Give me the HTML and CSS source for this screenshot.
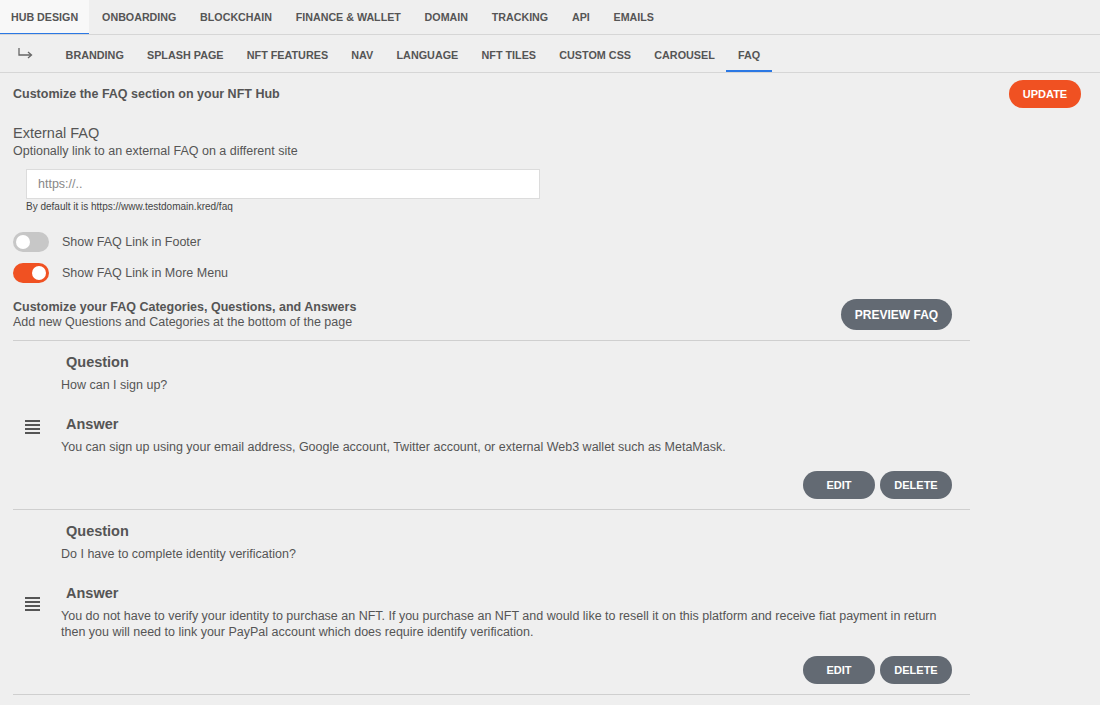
FILE: index.html
```html
<!DOCTYPE html>
<html lang="en">
<head>
    <meta charset="UTF-8">
    <meta name="viewport" content="width=device-width, initial-scale=1.0">
    <title>Hub Design - FAQ</title>
    <link rel="stylesheet" href="styles.css">
</head>
<body>
    <nav class="main-tabs">
        <a class="tab active">HUB DESIGN</a>
        <a class="tab">ONBOARDING</a>
        <a class="tab">BLOCKCHAIN</a>
        <a class="tab">FINANCE &amp; WALLET</a>
        <a class="tab">DOMAIN</a>
        <a class="tab">TRACKING</a>
        <a class="tab">API</a>
        <a class="tab">EMAILS</a>
    </nav>
    <nav class="sub-tabs">
        <span class="sub-arrow">
            <svg width="18" height="12" viewBox="0 0 18 12"><path d="M2 1v7h12" fill="none" stroke="#666" stroke-width="1.3"/><path d="M11 5l3.5 3-3.5 3" fill="none" stroke="#666" stroke-width="1.3"/></svg>
        </span>
        <a class="sub-tab">BRANDING</a>
        <a class="sub-tab">SPLASH PAGE</a>
        <a class="sub-tab">NFT FEATURES</a>
        <a class="sub-tab">NAV</a>
        <a class="sub-tab">LANGUAGE</a>
        <a class="sub-tab">NFT TILES</a>
        <a class="sub-tab">CUSTOM CSS</a>
        <a class="sub-tab">CAROUSEL</a>
        <a class="sub-tab active">FAQ</a>
    </nav>

    <main class="content">
        <div class="page-head">
            <h2>Customize the FAQ section on your NFT Hub</h2>
            <button class="btn btn-orange">UPDATE</button>
        </div>

        <h3 class="field-title">External FAQ</h3>
        <p class="field-desc">Optionally link to an external FAQ on a different site</p>
        <div class="field">
            <input type="text" placeholder="https://..">
            <small>By default it is https://www.testdomain.kred/faq</small>
        </div>

        <label class="switch-row">
            <span class="switch"></span>
            Show FAQ Link in Footer
        </label>
        <label class="switch-row">
            <span class="switch on"></span>
            Show FAQ Link in More Menu
        </label>

        <div class="faq-head">
            <div>
                <h4>Customize your FAQ Categories, Questions, and Answers</h4>
                <p>Add new Questions and Categories at the bottom of the page</p>
            </div>
            <button class="btn btn-grey btn-big">PREVIEW FAQ</button>
        </div>

        <div class="faq-list">
            <div class="faq-item">
                <div class="handle">
                    <svg width="15" height="14" viewBox="0 0 15 14"><g fill="#555"><rect y="0" width="15" height="2"/><rect y="4" width="15" height="2"/><rect y="8" width="15" height="2"/><rect y="12" width="15" height="2"/></g></svg>
                </div>
                <div class="faq-body">
                    <div class="label">Question</div>
                    <p class="text">How can I sign up?</p>
                    <div class="label answer">Answer</div>
                    <p class="text">You can sign up using your email address, Google account, Twitter account, or external Web3 wallet such as MetaMask.</p>
                    <div class="actions">
                        <button class="btn btn-grey">EDIT</button>
                        <button class="btn btn-grey">DELETE</button>
                    </div>
                </div>
            </div>
            <div class="faq-item">
                <div class="handle">
                    <svg width="15" height="14" viewBox="0 0 15 14"><g fill="#555"><rect y="0" width="15" height="2"/><rect y="4" width="15" height="2"/><rect y="8" width="15" height="2"/><rect y="12" width="15" height="2"/></g></svg>
                </div>
                <div class="faq-body">
                    <div class="label">Question</div>
                    <p class="text">Do I have to complete identity verification?</p>
                    <div class="label answer">Answer</div>
                    <p class="text">You do not have to verify your identity to purchase an NFT. If you purchase an NFT and would like to resell it on this platform and receive fiat payment in return then you will need to link your PayPal account which does require identify verification.</p>
                    <div class="actions">
                        <button class="btn btn-grey">EDIT</button>
                        <button class="btn btn-grey">DELETE</button>
                    </div>
                </div>
            </div>
        </div>
    </main>
</body>
</html>
```

FILE: styles.css
```css
body {
    font-family: "Liberation Sans", Arial, sans-serif;
    margin: 0;
    background-color: #efefef;
    color: #555;
}
a {
    cursor: pointer;
}
.main-tabs {
    display: flex;
    height: 34px;
    border-bottom: 1px solid #d6d6d6;
}
.tab {
    display: flex;
    align-items: center;
    padding: 0 11.9px;
    font-size: 10.7px;
    font-weight: bold;
    color: #555;
    box-sizing: border-box;
    height: 34px;
}
.tab.active {
    background-color: #f8f8f8;
    border-bottom: 1px solid #2b78e4;
    padding: 1px 11px 0 11px;
}
.main-tabs .tab:nth-child(2) { padding-left: 13px; }

.sub-tabs {
    display: flex;
    align-items: stretch;
    height: 37px;
    border-bottom: 1px solid #d6d6d6;
    padding-left: 17px;
}
.sub-arrow {
    display: flex;
    align-items: center;
    width: 37px;
    padding-bottom: 2px;
}
.sub-tab {
    display: flex;
    align-items: center;
    padding: 5px 11.6px 0 11.6px;
    font-size: 10.8px;
    font-weight: bold;
    color: #555;
    border-bottom: 2px solid transparent;
}
.sub-tab.active {
    border-bottom-color: #2b78e4;
}

.content {
    padding: 0 19px 0 13px;
}
.page-head {
    display: flex;
    justify-content: space-between;
    align-items: center;
    margin-top: 7px;
}
.page-head h2 {
    margin: 0;
    font-size: 12.5px;
    font-weight: bold;
}
.btn {
    border: none;
    border-radius: 16px;
    color: #fff;
    font-family: inherit;
    font-size: 11px;
    font-weight: bold;
    height: 28px;
    width: 72px;
    cursor: pointer;
}
.btn-orange {
    background-color: #f05122;
}
.btn-grey {
    background-color: #636a73;
}
.btn-big {
    height: 31px;
    width: 111px;
    font-size: 12px;
}

.field-title {
    margin: 17px 0 0;
    font-size: 14.5px;
    font-weight: normal;
}
.field-desc {
    margin: 3px 0 0;
    font-size: 12.5px;
}
.field {
    margin: 11px 0 0 13px;
}
.field input {
    display: block;
    box-sizing: border-box;
    width: 514px;
    height: 30px;
    border: 1px solid #dcdcdc;
    background: #fff;
    padding: 0 11px;
    font-family: inherit;
    font-size: 12.5px;
    color: #555;
}
.field input::placeholder {
    color: #888;
}
.field small {
    display: block;
    margin-top: 2px;
    font-size: 10px;
    color: #444;
}

.switch-row {
    display: flex;
    align-items: center;
    gap: 13px;
    font-size: 12.5px;
    margin-top: 20px;
}
.switch-row + .switch-row {
    margin-top: 11px;
}
.switch {
    position: relative;
    display: inline-block;
    width: 36px;
    height: 20px;
    border-radius: 10px;
    background-color: #c7c7c7;
}
.switch::after {
    content: "";
    position: absolute;
    top: 3px;
    left: 3px;
    width: 14px;
    height: 14px;
    border-radius: 50%;
    background: #fff;
}
.switch.on {
    background-color: #f05122;
}
.switch.on::after {
    left: 19px;
}

.faq-head {
    display: flex;
    justify-content: space-between;
    align-items: center;
    width: 957px;
    margin-top: 16px;
    padding-bottom: 10px;
    border-bottom: 1px solid #cfcfcf;
}
.faq-head h4 {
    margin: 0;
    font-size: 12.5px;
}
.faq-head p {
    margin: 1px 0 0;
    font-size: 12.5px;
}
.faq-head .btn {
    margin-right: 18px;
}

.faq-list {
    width: 957px;
}
.faq-item {
    display: flex;
    align-items: center;
    border-bottom: 1px solid #cfcfcf;
    padding-top: 13px;
    padding-bottom: 10px;
}
.handle {
    width: 48px;
    padding-left: 12px;
    box-sizing: border-box;
    display: flex;
}
.faq-body {
    flex: 1;
    padding-right: 18px;
}
.label {
    font-size: 14.5px;
    font-weight: bold;
    margin-left: 5px;
}
.label.answer {
    margin-top: 23px;
}
.text {
    margin: 7px 0 0;
    font-size: 12.5px;
    line-height: 16px;
}
.label.answer + .text {
    margin-top: 7px;
}
.actions {
    display: flex;
    justify-content: flex-end;
    gap: 5px;
    margin-top: 16px;
}
```
